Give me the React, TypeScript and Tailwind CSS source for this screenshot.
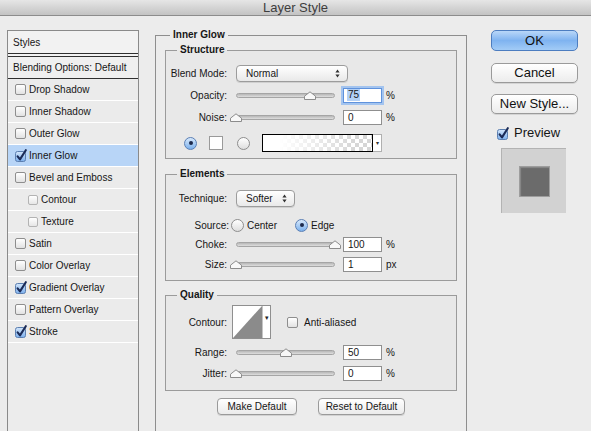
import React from "react";

type StyleRow = { label: string; checked?: boolean; active?: boolean; indent?: boolean };

const styleRows: StyleRow[] = [
  { label: "Drop Shadow" },
  { label: "Inner Shadow" },
  { label: "Outer Glow" },
  { label: "Inner Glow", checked: true, active: true },
  { label: "Bevel and Emboss" },
  { label: "Contour", indent: true },
  { label: "Texture", indent: true },
  { label: "Satin" },
  { label: "Color Overlay" },
  { label: "Gradient Overlay", checked: true },
  { label: "Pattern Overlay" },
  { label: "Stroke", checked: true },
];

function CheckBox({ checked, small }: { checked?: boolean; small?: boolean }) {
  if (checked) {
    return (
      <svg width="13" height="13" viewBox="0 0 13 13" className="block shrink-0">
        <defs>
          <linearGradient id="cbBlue" x1="0" y1="0" x2="0" y2="1">
            <stop offset="0" stopColor="#d3e6fb" />
            <stop offset="1" stopColor="#7cafec" />
          </linearGradient>
        </defs>
        <rect x="0.5" y="2.5" width="10" height="10" rx="2" fill="url(#cbBlue)" stroke="#5c7fb0" />
        <path
          d="M2.6 7.4 L5 10.4 L10.8 1.2"
          fill="none"
          stroke="#1b2b57"
          strokeWidth="2.1"
          strokeLinecap="round"
          strokeLinejoin="round"
        />
      </svg>
    );
  }
  if (small) {
    return <span className="block h-[10px] w-[10px] shrink-0 rounded-[2px] border border-[#b3b3b3] bg-gradient-to-b from-white to-[#e6e6e6]" />;
  }
  return <span className="block h-[11px] w-[11px] shrink-0 rounded-[2px] border border-[#8e8e8e] bg-gradient-to-b from-white to-[#e2e2e2]" />;
}

function Radio({ on }: { on?: boolean }) {
  if (on) {
    return (
      <span className="flex h-[13px] w-[13px] shrink-0 items-center justify-center rounded-full border border-[#5a7fb5] bg-gradient-to-b from-[#d8e9fb] to-[#7bb0ec]">
        <span className="block h-[4px] w-[4px] rounded-full bg-[#1d2a4c]" />
      </span>
    );
  }
  return <span className="block h-[13px] w-[13px] shrink-0 rounded-full border border-[#8e8e8e] bg-gradient-to-b from-white to-[#dedede]" />;
}

function Slider({ value }: { value: number }) {
  return (
    <div className="relative flex h-[12px] w-[99px] shrink-0 items-center">
      <div className="h-[5px] w-full rounded-full border border-[#a5a5a5] bg-gradient-to-b from-[#b7b7b7] to-[#dedede]" />
      <svg
        width="12"
        height="9"
        viewBox="0 0 12 9"
        className="absolute top-[2px]"
        style={{ left: `calc(${value}% - 6px)` }}
      >
        <path d="M0.5 8.5 V5.2 L6 0.8 L11.5 5.2 V8.5 Z" fill="#f8f8f8" stroke="#8c8c8c" strokeLinejoin="round" />
      </svg>
    </div>
  );
}

function Field({ value, focused }: { value: string; focused?: boolean }) {
  return (
    <div
      className={
        focused
          ? "ml-[8px] flex h-[15px] w-[39px] shrink-0 items-center border border-[#5f92dc] bg-white pl-[3px] shadow-[0_0_0_2px_#a3c4ef]"
          : "ml-[8px] flex h-[15px] w-[39px] shrink-0 items-center border border-[#8f8f8f] bg-white pl-[4px]"
      }
    >
      {focused ? <span className="bg-[#b3d0f5] px-[1px] leading-[12px]">{value}</span> : value}
    </div>
  );
}

function Label({ children }: { children: React.ReactNode }) {
  return <span className="w-[61px] shrink-0 text-right">{children}</span>;
}

function SliderRow({
  label,
  value,
  pct,
  unit = "%",
  focused,
  h = "h-[22px]",
}: {
  label: string;
  value: string;
  pct: number;
  unit?: string;
  focused?: boolean;
  h?: string;
}) {
  return (
    <div className={`flex items-center ${h}`}>
      <Label>{label}</Label>
      <div className="ml-[9px]">
        <Slider value={pct} />
      </div>
      <Field value={value} focused={focused} />
      <span className="ml-[4px]">{unit}</span>
    </div>
  );
}

function Popup({ value, w }: { value: string; w: string }) {
  return (
    <div
      className={`ml-[9px] flex h-[17px] items-center justify-between rounded-[4px] border border-[#9c9c9c] bg-gradient-to-b from-white to-[#e9e9e9] pl-[9px] pr-[7px] shadow-[0_1px_0_#d0d0d0] ${w}`}
    >
      <span>{value}</span>
      <svg width="5" height="9" viewBox="0 0 5 9">
        <path d="M2.5 0.5 L4.6 3.4 H0.4 Z M2.5 8.5 L4.6 5.6 H0.4 Z" fill="#333" />
      </svg>
    </div>
  );
}

function Group({
  title,
  className = "",
  children,
}: {
  title: string;
  className?: string;
  children: React.ReactNode;
}) {
  return (
    <fieldset className={`border border-[#9b9b9b] bg-[#e8e8e8] ${className}`}>
      <legend className="ml-[11px] px-[3px] text-[10px] font-bold leading-[12px]">{title}</legend>
      {children}
    </fieldset>
  );
}

function MacButton({ children, primary }: { children: React.ReactNode; primary?: boolean }) {
  return (
    <div
      className={
        primary
          ? "flex h-[21px] w-[87px] items-center justify-center rounded-[5px] border border-[#4c7dc0] bg-gradient-to-b from-[#b9d7f8] via-[#7fb3f0] to-[#a2cbf6] text-[13px] text-[#111]"
          : "flex h-[20px] w-[87px] items-center justify-center rounded-[5px] border border-[#9a9a9a] bg-gradient-to-b from-white to-[#ececec] text-[13px] text-[#111] shadow-[0_1px_0_#d4d4d4]"
      }
    >
      {children}
    </div>
  );
}

function SmallButton({ children, w }: { children: React.ReactNode; w: string }) {
  return (
    <div
      className={`flex h-[17px] items-center justify-center rounded-[4px] border border-[#9a9a9a] bg-gradient-to-b from-white to-[#ebebeb] shadow-[0_1px_0_#d2d2d2] ${w}`}
    >
      {children}
    </div>
  );
}

export default function App() {
  return (
    <div className="h-[431px] w-[591px] overflow-hidden bg-[#ececec] font-['Liberation_Sans',Arial,sans-serif] text-[10px] text-[#161616]">
      <div className="flex h-[16px] items-center justify-center border-b border-[#8c8c8c] bg-gradient-to-b from-[#e6e6e6] to-[#c3c3c3] text-[13px] leading-[15px] text-[#3d3d3d]">
        Layer Style
      </div>

      <div className="flex">
        {/* styles list */}
        <div className="ml-[7px] mt-[14px] h-[410px] w-[132px] shrink-0 border border-[#8a8a8a] bg-[#ececec]">
          <div className="flex h-[22px] items-center bg-[#f2f2f2] pl-[5px]">Styles</div>
          <div className="h-[4px] border-y border-[#2f2f2f] bg-[#f2f2f2]" />
          <div className="flex h-[22px] items-center border-b border-[#2f2f2f] bg-[#efefef] pl-[5px]">
            Blending Options: Default
          </div>
          {styleRows.map((r) => (
            <div
              key={r.label}
              className={
                r.active
                  ? "flex h-[22px] items-center gap-[3px] border-b border-white bg-[#b8d5f7] pl-[7px]"
                  : r.indent
                    ? "flex h-[22px] items-center gap-[3px] border-b border-white bg-[#ebebeb] pl-[20px]"
                    : "flex h-[22px] items-center gap-[3px] border-b border-white bg-[#ebebeb] pl-[7px]"
              }
            >
              <CheckBox checked={r.checked} small={r.indent} />
              <span className={r.checked ? "-ml-[2px]" : ""}>{r.label}</span>
            </div>
          ))}
        </div>

        {/* settings */}
        <fieldset className="ml-[16px] mt-[13px] h-[420px] w-[312px] shrink-0 border border-[#8e8e8e]">
          <legend className="ml-[14px] px-[3px] text-[10px] font-bold leading-[12px]">Inner Glow</legend>
          <div className="px-[9px] pt-[3px]">
            <Group title="Structure" className="h-[115px]">
              <div className="pt-[6px]">
                <div className="flex h-[22px] items-center">
                  <Label>Blend Mode:</Label>
                  <Popup value="Normal" w="w-[112px]" />
                </div>
                <SliderRow label="Opacity:" value="75" pct={75} focused />
                <SliderRow label="Noise:" value="0" pct={0} />
                <div className="mt-[4px] flex h-[22px] items-center">
                  <span className="ml-[18px] flex">
                    <Radio on />
                  </span>
                  <span className="ml-[12px] block h-[14px] w-[14px] border border-[#9a9a9a] bg-white" />
                  <span className="ml-[14px] flex">
                    <Radio />
                  </span>
                  <div className="ml-[12px] flex h-[18px]">
                    <div className="w-[111px] border border-black bg-[linear-gradient(to_right,#fff_15%,rgba(255,255,255,0)_85%),repeating-conic-gradient(#d6d6d6_0%_25%,#fff_0%_50%)] bg-[length:100%_100%,8px_8px]" />
                    <div className="flex w-[9px] items-center justify-center border-y border-r border-[#b0b0b0] bg-white text-[6px] text-[#333]">
                      ▾
                    </div>
                  </div>
                </div>
              </div>
            </Group>

            <Group title="Elements" className="mt-[9px] h-[113px]">
              <div className="pt-[7px]">
                <div className="flex h-[22px] items-center">
                  <Label>Technique:</Label>
                  <Popup value="Softer" w="w-[59px]" />
                </div>
                <div className="mt-[6px] flex h-[20px] items-center">
                  <span className="w-[63px] shrink-0 text-right">Source:</span>
                  <span className="ml-[2px] flex">
                    <Radio />
                  </span>
                  <span className="ml-[3px]">Center</span>
                  <span className="ml-[18px] flex">
                    <Radio on />
                  </span>
                  <span className="ml-[3px]">Edge</span>
                </div>
                <SliderRow label="Choke:" value="100" pct={100} h="h-[18px]" />
                <SliderRow label="Size:" value="1" pct={0} unit="px" />
              </div>
            </Group>

            <Group title="Quality" className="mt-[8px] h-[102px]">
              <div className="pt-[4px]">
                <div className="flex h-[34px] items-center">
                  <Label>Contour:</Label>
                  <div className="ml-[5px] flex h-[34px] w-[39px] border border-[#8f8f8f] bg-white">
                    <svg width="29" height="32" viewBox="0 0 29 32" className="shrink-0">
                      <path d="M0 32 L29 0 V32 Z" fill="#8b8b8b" />
                    </svg>
                    <div className="flex flex-1 items-start justify-center border-l border-[#c4c4c4] pt-[8px] text-[7px] leading-[7px] text-[#222]">
                      ▾
                    </div>
                  </div>
                  <span className="ml-[16px] flex">
                    <CheckBox />
                  </span>
                  <span className="ml-[6px]">Anti-aliased</span>
                </div>
                <SliderRow label="Range:" value="50" pct={50} h="mt-[2px] h-[22px]" />
                <SliderRow label="Jitter:" value="0" pct={0} h="h-[20px]" />
              </div>
            </Group>

            <div className="mt-[7px] flex justify-center gap-[21px]">
              <SmallButton w="w-[80px]">Make Default</SmallButton>
              <SmallButton w="w-[87px]">Reset to Default</SmallButton>
            </div>
          </div>
        </fieldset>

        {/* dialog buttons */}
        <div className="ml-[24px] mt-[14px] w-[87px] shrink-0">
          <MacButton primary>OK</MacButton>
          <div className="mt-[12px]">
            <MacButton>Cancel</MacButton>
          </div>
          <div className="mt-[11px]">
            <MacButton>New Style...</MacButton>
          </div>
          <div className="mt-[12px] flex h-[14px] items-center pl-[6px] text-[13px]">
            <CheckBox checked />
            <span className="ml-[4px]">Preview</span>
          </div>
          <div className="ml-[10px] mt-[8px] flex h-[65px] w-[65px] items-center justify-center border-l border-t border-[#b3b3b3] bg-[#d2d2d2]">
            <div className="h-[31px] w-[31px] border border-[#9d9d9d] bg-[#6b6b6b] shadow-[inset_1px_1px_1px_#8a8a8a]" />
          </div>
        </div>
      </div>
    </div>
  );
}
